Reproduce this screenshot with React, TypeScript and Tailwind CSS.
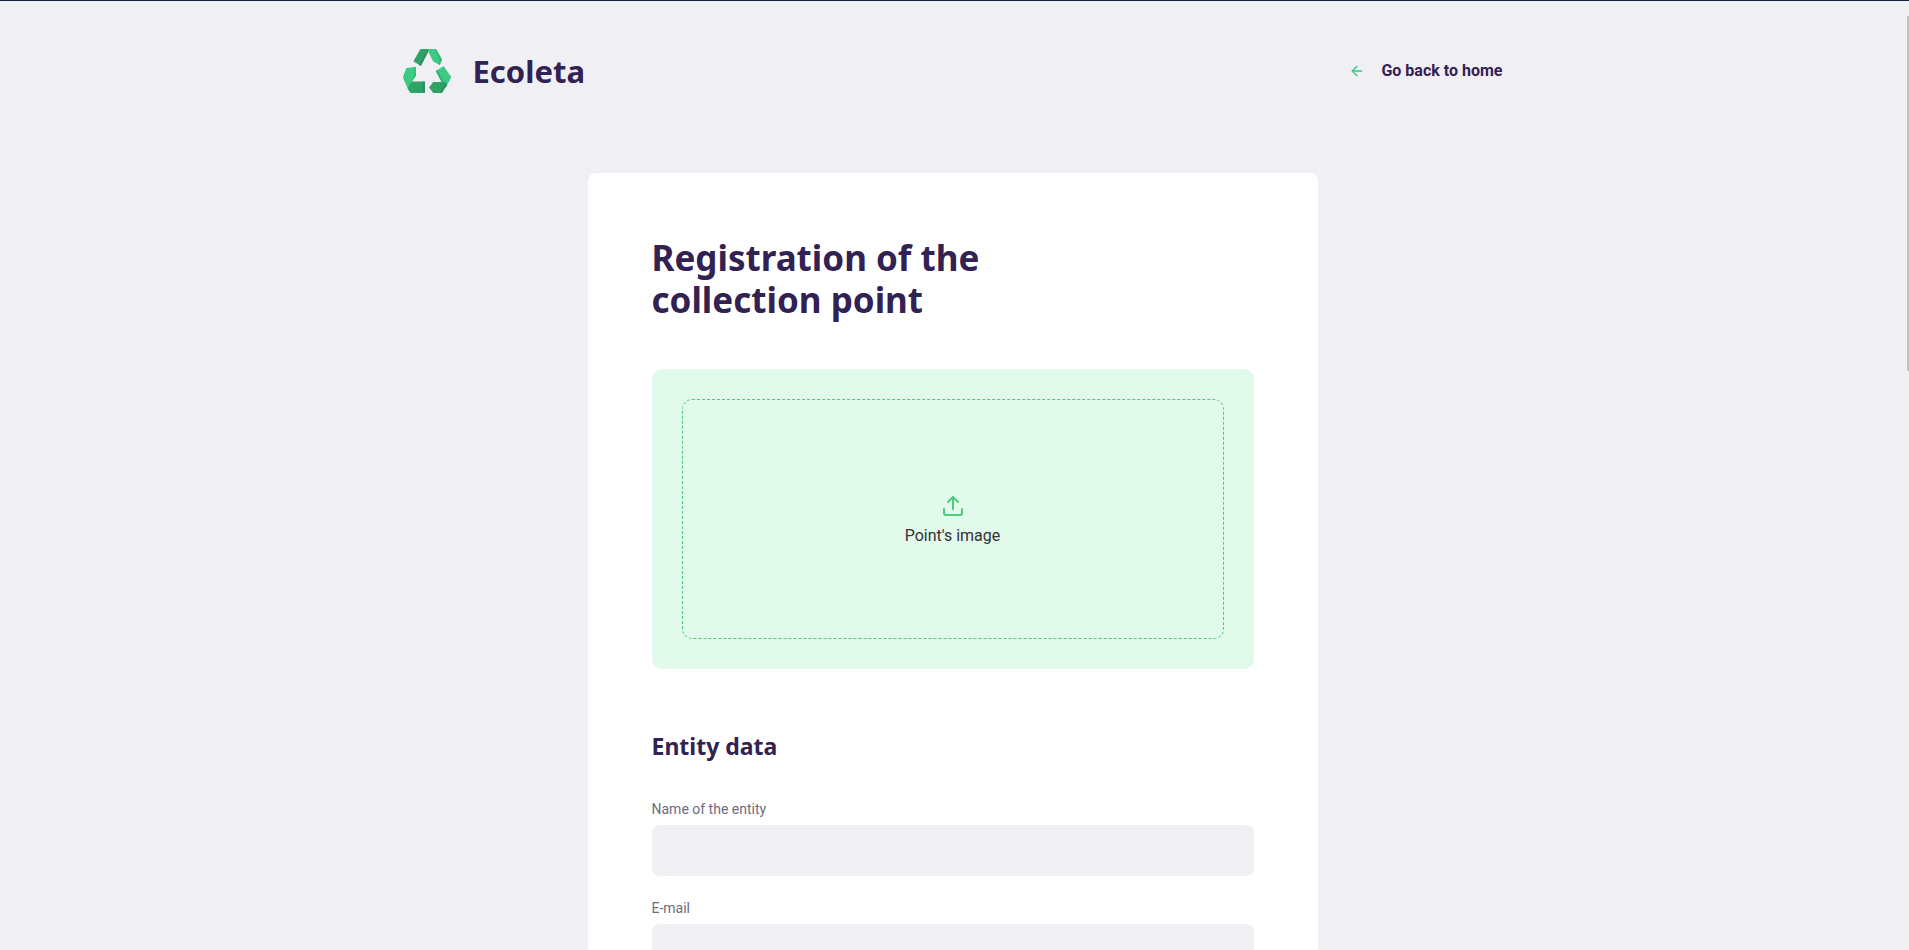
import { FiArrowLeft, FiUpload } from "react-icons/fi";

function LogoMark() {
  return (
    <svg viewBox="0 0 48 44" className="h-11 w-12" aria-hidden="true">
      <path d="M17 0.8Q17.5 0 18.5 0H26.5L17.8 16.9L10.4 12.3Z" fill="#30a268" />
      <path d="M26.5 0L17.8 16.9L16.2 15.9L24.4 0Z" fill="#2a9160" />
      <path d="M24 0H31.5Q33 0 33.8 1.2L38.9 10.4L36.8 16L30.2 12.4Z" fill="#3dca82" />
      <path d="M33 0.2L38.9 10.4L36.8 16L35.4 15.3L37 10.8L31.4 0Z" fill="#34b574" />
      <path d="M3.4 19L12.6 17.9L12.9 26.8L8.8 32.6L5.4 41L0.3 29.6Q-0.2 28.4 0.3 27Z" fill="#3dca82" />
      <path d="M12.6 17.9L12.9 26.8L8.8 32.6L5.4 41L4.6 38.8L11.4 26.4L10.8 18.1Z" fill="#34b574" />
      <path d="M9 32.5H22V44H8.6Q7.4 44 6.8 43L4.8 39.8Z" fill="#30a268" />
      <path d="M19.6 32.5H22V44H19.6Z" fill="#2a9160" />
      <path d="M32.8 22L40.6 17L47.6 26.9Q48.3 28.1 47.6 29.5L42.8 38.6L38.4 32.8Z" fill="#3dca82" />
      <path d="M32.8 22L34.4 21L40.4 31.6L43.4 37.4L42.8 38.6L38.4 32.8Z" fill="#34b574" />
      <path d="M26 38.4L30.2 32.9H42.8L39.6 43Q39 44 37.8 44H30.2Z" fill="#30a268" />
      <path d="M44 36L39.6 43Q39 44 37.8 44H36.8L42.4 32.9Z" fill="#2a9160" />
    </svg>
  );
}

function Field({ id, label, type }: { id: string; label: string; type: string }) {
  return (
    <div className="mb-6 flex flex-col">
      <label htmlFor={id} className="mb-2 text-sm leading-4 text-[#6c6c80]">
        {label}
      </label>
      <input
        id={id}
        name={id}
        type={type}
        className="h-[51px] rounded-lg bg-[#f0eff4] px-6 text-base text-[#6c6c80]"
      />
    </div>
  );
}

export default function App() {
  return (
    <div className="flex h-screen flex-col border-t border-[#15203f] bg-[#f0eff4] font-[Roboto,sans-serif] text-[#322153]">
      <div className="flex min-h-0 flex-1">
        <div className="min-w-0 flex-1 overflow-y-auto [scrollbar-width:none]">
          <div className="mx-auto max-w-[1100px]">
            <header className="mt-12 flex h-11 items-center justify-between">
              <a href="#home" className="flex items-center gap-[22px]">
                <LogoMark />
                <span className="font-['Noto_Sans',sans-serif] text-[31px] font-bold leading-[44px]">
                  Ecoleta
                </span>
              </a>
              <a href="#home" className="flex items-center gap-4 text-base font-bold">
                <FiArrowLeft size={16} className="text-[#34cb79]" />
                Go back to home
              </a>
            </header>

            <form className="mx-auto my-20 max-w-[730px] rounded-lg bg-white p-16">
              <h1 className="font-['Noto_Sans',sans-serif] text-[35px] font-bold leading-[42px]">
                Registration of the
                <br />
                collection point
              </h1>

              <button
                type="button"
                className="mt-12 flex h-[300px] w-full rounded-[10px] bg-[#e1faec] p-[30px]"
              >
                <span className="flex h-full w-full flex-col items-center justify-center gap-2 rounded-[10px] border border-dashed border-[#4ecb79] text-base leading-[19px] text-[#333333]">
                  <FiUpload size={24} className="text-[#4ecb79]" />
                  Point's image
                </span>
              </button>

              <fieldset className="mt-16">
                <legend className="mb-[42px] font-['Noto_Sans',sans-serif] text-[23px] font-bold leading-[26px]">
                  Entity data
                </legend>
                <Field id="name" label="Name of the entity" type="text" />
                <Field id="email" label="E-mail" type="email" />
              </fieldset>
            </form>
          </div>
        </div>
        <div className="flex w-1 flex-col items-end bg-[#f1f1f1] pt-[15px]" aria-hidden="true">
          <div className="h-[38%] w-0.5 bg-[#c1c1c1]" />
        </div>
      </div>
    </div>
  );
}
